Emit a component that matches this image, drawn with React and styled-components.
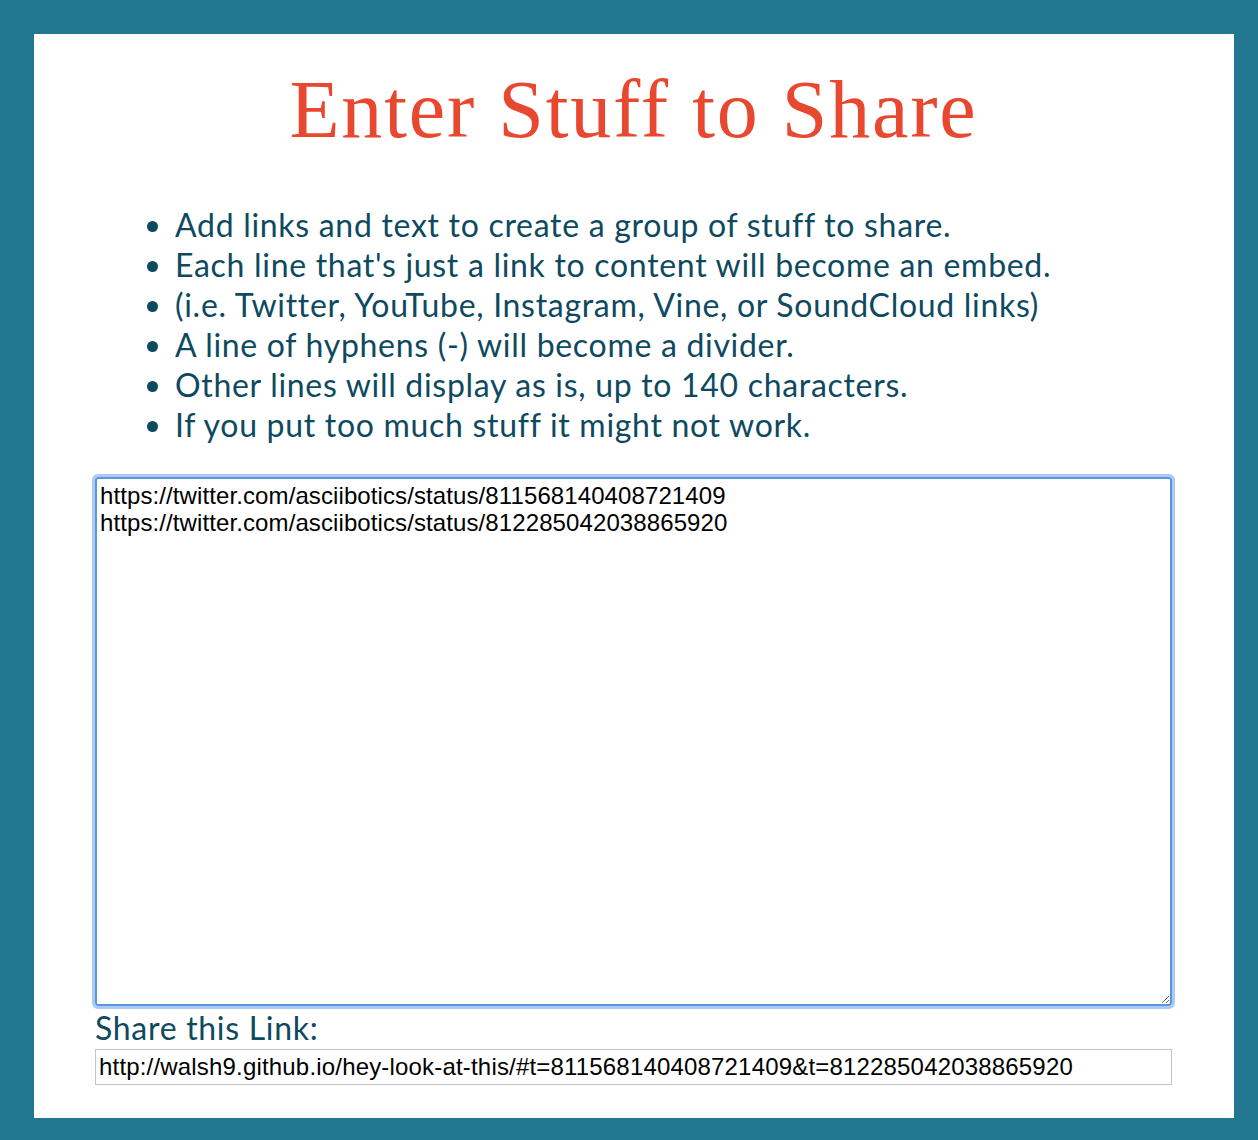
import React from "react";
import styled, { createGlobalStyle } from "styled-components";

const Global = createGlobalStyle`
  html, body { margin: 0; padding: 0; }
  body {
    background: #20778f;
    padding: 34px 24px 22px 34px;
  }
`;

const Card = styled.main`
  background: #ffffff;
  width: 1200px;
  height: 1084px;
  box-sizing: border-box;
  padding: 0 62px 0 61px;
  display: flex;
  flex-direction: column;
`;

const Title = styled.h1`
  margin: 26px 0 0;
  text-align: center;
  font-family: "Liberation Serif", serif;
  font-weight: 400;
  font-size: 82px;
  line-height: 100px;
  color: #e8482f;
  letter-spacing: 1.8px;
`;

const List = styled.ul`
  margin: 45px 0 0;
  padding: 0 0 0 80px;
  font-family: Lato, "Open Sans", sans-serif;
  font-size: 32px;
  line-height: 40px;
  letter-spacing: 0.7px;
  color: #0e4a5f;
`;

const Item = styled.li`
  padding-left: 0;
`;

const Area = styled.textarea`
  margin: 32px 0 0;
  width: 100%;
  height: 529px;
  box-sizing: border-box;
  border: 2px solid #5b95e0;
  border-radius: 3px;
  outline: 3px solid #a9cbf6;
  outline-offset: 0;
  padding: 3px 3px;
  font-family: "Liberation Sans", Arial, sans-serif;
  font-size: 24px;
  line-height: 27px;
  letter-spacing: 0.1px;
  color: #000;
  resize: vertical;
`;

const Label = styled.div`
  margin-top: 3px;
  font-family: Lato, "Open Sans", sans-serif;
  font-size: 32px;
  line-height: 38px;
  letter-spacing: 0.7px;
  color: #0e4a5f;
`;

const LinkBox = styled.input`
  margin-top: 2px;
  width: 100%;
  height: 36px;
  box-sizing: border-box;
  border: 1px solid #c4c4c4;
  padding: 0 3px;
  font-family: "Liberation Sans", Arial, sans-serif;
  font-size: 24px;
  letter-spacing: 0.18px;
  color: #000;
`;

const items = [
  "Add links and text to create a group of stuff to share.",
  "Each line that's just a link to content will become an embed.",
  "(i.e. Twitter, YouTube, Instagram, Vine, or SoundCloud links)",
  "A line of hyphens (-) will become a divider.",
  "Other lines will display as is, up to 140 characters.",
  "If you put too much stuff it might not work.",
];

export default function App() {
  return (
    <>
      <Global />
      <Card>
        <Title>Enter Stuff to Share</Title>
        <List>
          {items.map((t) => (
            <Item key={t}>{t}</Item>
          ))}
        </List>
        <Area
          defaultValue={
            "https://twitter.com/asciibotics/status/811568140408721409\nhttps://twitter.com/asciibotics/status/812285042038865920"
          }
        />
        <Label>Share this Link:</Label>
        <LinkBox
          readOnly
          value="http://walsh9.github.io/hey-look-at-this/#t=811568140408721409&t=812285042038865920"
        />
      </Card>
    </>
  );
}
